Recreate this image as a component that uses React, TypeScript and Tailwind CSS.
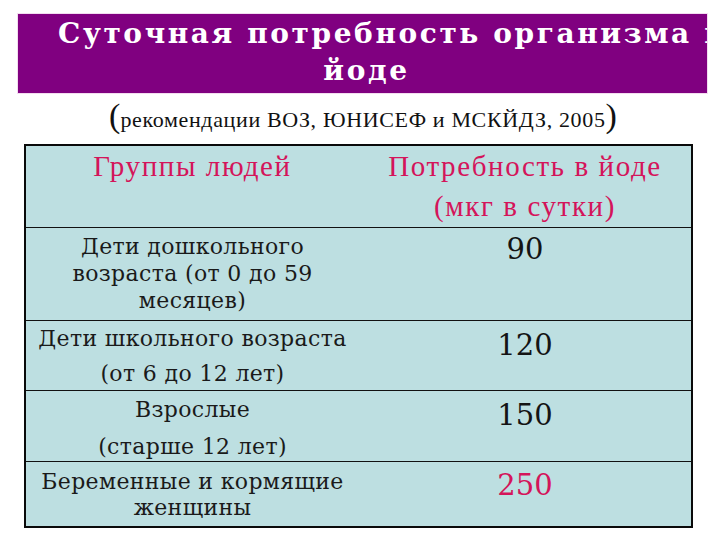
import React from "react";

const rows = [
  { lines: ["Дети дошкольного", "возраста (от 0 до 59", "месяцев)"], value: "90", lh: "leading-[27px]", h: "h-[93px]", pink: false, pt: "pt-[5px]", vpt: "pt-[3px]" },
  { lines: ["Дети школьного возраста", "(от 6 до 12 лет)"], value: "120", lh: "leading-[35px]", h: "h-[70px]", pink: false, pt: "pt-[0px]", vpt: "pt-[6px]" },
  { lines: ["Взрослые", "(старше 12 лет)"], value: "150", lh: "leading-[37px]", h: "h-[71px]", pink: false, pt: "pt-[0px]", vpt: "pt-[6px]" },
  { lines: ["Беременные и кормящие", "женщины"], value: "250", lh: "leading-[26px]", h: "h-[64px]", pink: true, pt: "pt-[7px]", vpt: "pt-[5px]" },
];

export default function App() {
  return (
    <div className="w-[720px] h-[540px] bg-white overflow-hidden flex flex-col">
      <div className="mt-[14px] ml-[18px] w-[689px] h-[79px] bg-[#800080] overflow-hidden ring-1 ring-[#f3dcf0] text-white font-bold [font-family:DejaVu_Serif,Liberation_Serif,serif] text-[28px] leading-[37px] tracking-[2.6px]">
        <div className="whitespace-nowrap pl-[40px] pt-[1px]">Суточная потребность организма в</div>
        <div className="text-center pl-[8px]">йоде</div>
      </div>
      <div className="flex items-baseline justify-center pl-[6px] pt-[3px] h-[51px] leading-[40px] [font-family:Liberation_Serif,serif] text-[#111] whitespace-nowrap">
        <span className="text-[34px]">(</span>
        <span className="text-[22px] tracking-[0.65px]">рекомендации ВОЗ, ЮНИСЕФ и МСКЙДЗ, 2005</span>
        <span className="text-[34px]">)</span>
      </div>
      <div className="ml-[24px] w-[669px] border-2 border-[#0a0a0a] bg-[#bddfe1]">
        <div className="flex h-[82px] border-b border-[#111] text-[#d4145a] [font-family:Liberation_Serif,serif] text-[29px] leading-[40px] tracking-[1.6px]">
          <div className="w-[333px] text-center">Группы людей</div>
          <div className="flex-1 text-center">
            Потребность в йоде
            <br />
            (мкг в сутки)
          </div>
        </div>
        {rows.map((r, i) => (
          <div
            key={i}
            className={`flex ${r.h} ${i < rows.length - 1 ? "border-b border-[#111]" : ""}`}
          >
            <div className={`w-[333px] text-center text-[#1a1a1a] [font-family:DejaVu_Serif,Liberation_Serif,serif] text-[22px] tracking-[0.35px] whitespace-nowrap ${r.lh} ${r.pt}`}>
              {r.lines.map((l, j) => (
                <div key={j}>{l}</div>
              ))}
            </div>
            <div
              className={`flex-1 text-center [font-family:DejaVu_Serif,Liberation_Serif,serif] text-[29px] leading-[36px] ${r.vpt} ${r.pink ? "text-[#d4145a]" : "text-[#141414]"}`}
            >
              {r.value}
            </div>
          </div>
        ))}
      </div>
    </div>
  );
}
